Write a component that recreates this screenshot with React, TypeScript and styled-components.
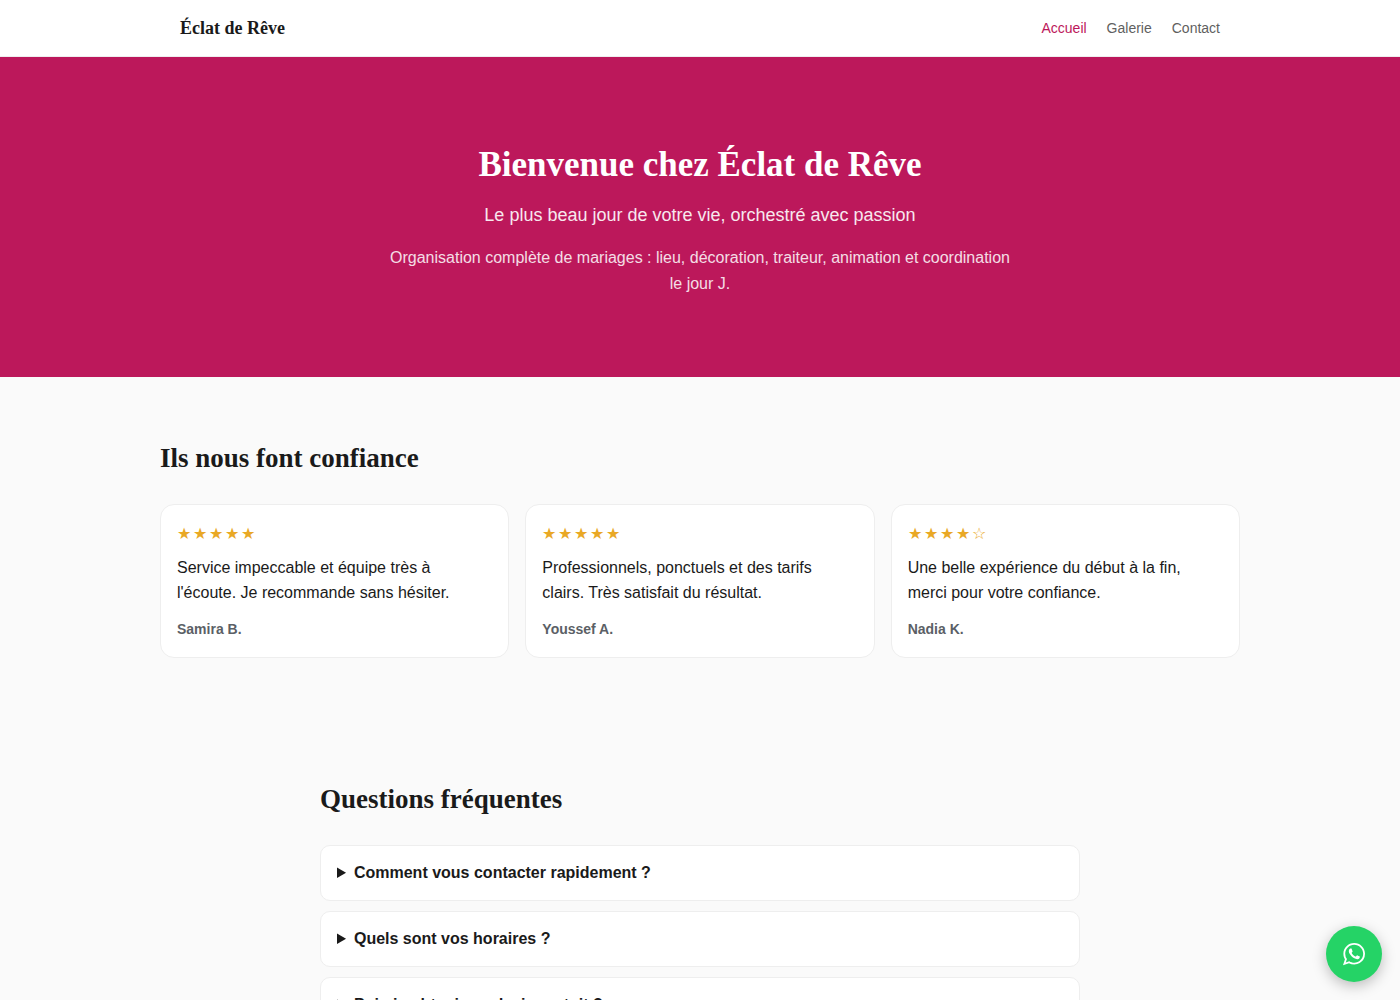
import React from "react";
import styled, { createGlobalStyle } from "styled-components";

const colors = {
  primary: "#bc185b",
  ink: "#1a1a1a",
  muted: "#5b5f66",
  nav: "#5f5f5f",
  line: "#eeeeee",
  page: "#fafafa",
  star: "#e9a825",
  whatsapp: "#25d366",
};

const serif = `"Liberation Serif", "Times New Roman", serif`;
const sans = `"Liberation Sans", Arial, sans-serif`;

const GlobalStyle = createGlobalStyle`
  *, *::before, *::after { box-sizing: border-box; }
  html { scrollbar-width: none; }
  body {
    margin: 0;
    background: ${colors.page};
    color: ${colors.ink};
    font-family: ${sans};
    font-size: 16px;
    line-height: 25px;
  }
`;

const Header = styled.header`
  background: #ffffff;
  border-bottom: 1px solid ${colors.line};
`;

const HeaderInner = styled.div`
  display: flex;
  align-items: center;
  justify-content: space-between;
  max-width: 1080px;
  margin: 0 auto;
  padding: 14px 20px;
`;

const Brand = styled.a`
  color: ${colors.ink};
  font-family: ${serif};
  font-size: 18px;
  font-weight: 700;
  line-height: 28px;
  text-decoration: none;
`;

const Nav = styled.nav`
  display: flex;
  gap: 20px;
`;

const NavLink = styled.a<{ $active?: boolean }>`
  color: ${(p) => (p.$active ? colors.primary : colors.nav)};
  font-size: 14px;
  text-decoration: none;
`;

const Hero = styled.section`
  padding: 80px 20px;
  background: ${colors.primary};
  color: #ffffff;
  text-align: center;
`;

const HeroTitle = styled.h1`
  margin: 0 0 8px;
  font-family: ${serif};
  font-size: 35px;
  line-height: 56px;
`;

const HeroTagline = styled.p`
  margin: 0 0 16px;
  font-size: 18px;
  line-height: 28px;
  opacity: 0.9;
`;

const HeroText = styled.p`
  max-width: 630px;
  margin: 0 auto;
  line-height: 26px;
  opacity: 0.85;
`;

const Section = styled.section<{ $width: number }>`
  max-width: ${(p) => p.$width}px;
  margin: 0 auto;
  padding: 60px 0;
`;

const SectionTitle = styled.h2`
  margin: 0 0 24px;
  font-family: ${serif};
  font-size: 27px;
  line-height: 43px;
`;

const ReviewGrid = styled.div`
  display: grid;
  grid-template-columns: repeat(auto-fit, minmax(260px, 1fr));
  gap: 16px;
`;

const ReviewCard = styled.article`
  padding: 16px;
  background: #ffffff;
  border: 1px solid ${colors.line};
  border-radius: 14px;
`;

const Stars = styled.div`
  display: flex;
  gap: 2px;
  color: ${colors.star};
  line-height: 26px;
`;

const Quote = styled.p`
  margin: 8px 0 12px;
`;

const Author = styled.div`
  color: ${colors.muted};
  font-size: 14px;
  font-weight: 700;
  line-height: 24px;
`;

const FaqList = styled.div`
  display: grid;
  gap: 10px;
`;

const FaqItem = styled.details`
  padding: 14px 16px;
  background: #ffffff;
  border: 1px solid ${colors.line};
  border-radius: 10px;
`;

const Question = styled.summary`
  font-weight: 700;
  line-height: 26px;
  cursor: pointer;
`;

const Answer = styled.p`
  margin: 8px 0 0;
`;

const ChatButton = styled.a`
  position: fixed;
  right: 18px;
  bottom: 18px;
  display: flex;
  align-items: center;
  justify-content: center;
  width: 56px;
  height: 56px;
  border-radius: 50%;
  background: ${colors.whatsapp};
  color: #ffffff;
  box-shadow: 0 4px 14px rgba(0, 0, 0, 0.25);
`;

const reviews = [
  {
    rating: 5,
    text: "Service impeccable et équipe très à l'écoute. Je recommande sans hésiter.",
    author: "Samira B.",
  },
  {
    rating: 5,
    text: "Professionnels, ponctuels et des tarifs clairs. Très satisfait du résultat.",
    author: "Youssef A.",
  },
  {
    rating: 4,
    text: "Une belle expérience du début à la fin, merci pour votre confiance.",
    author: "Nadia K.",
  },
];

const faqs = [
  {
    question: "Comment vous contacter rapidement ?",
    answer: "Écrivez-nous directement sur WhatsApp.",
  },
  {
    question: "Quels sont vos horaires ?",
    answer: "Nous sommes disponibles du lundi au samedi.",
  },
  {
    question: "Puis-je obtenir un devis gratuit ?",
    answer: "Oui, le devis est gratuit et sans engagement.",
  },
];

function Rating({ value }: { value: number }) {
  return (
    <Stars role="img" aria-label={`${value} sur 5`}>
      {[1, 2, 3, 4, 5].map((n) => (
        <span key={n}>{n <= value ? "★" : "☆"}</span>
      ))}
    </Stars>
  );
}

function WhatsappIcon() {
  return (
    <svg width="32" height="32" viewBox="0 0 32 32" fill="currentColor" aria-hidden="true">
      <path d="M19.11 17.205c-.372 0-1.088 1.39-1.518 1.39a.63.63 0 0 1-.315-.1c-.802-.402-1.504-.817-2.163-1.447-.545-.516-1.146-1.29-1.46-1.963a.426.426 0 0 1-.073-.215c0-.33.99-.945.99-1.49 0-.143-.73-2.09-.832-2.335-.143-.372-.214-.487-.6-.487-.187 0-.36-.043-.53-.043-.302 0-.53.115-.746.315-.688.645-1.032 1.318-1.06 2.264v.114c-.015.99.472 1.977 1.017 2.78 1.23 1.82 2.506 3.41 4.554 4.34.616.287 2.035.888 2.722.888.817 0 2.15-.515 2.478-1.318.13-.33.244-.73.244-1.088 0-.058 0-.144-.03-.215-.1-.172-2.434-1.39-2.678-1.39zm-2.908 7.593c-1.747 0-3.48-.53-4.942-1.49L7.793 24.41l1.132-3.337a8.955 8.955 0 0 1-1.72-5.272c0-4.955 4.04-8.995 8.997-8.995S25.2 10.845 25.2 15.8c0 4.958-4.04 8.998-8.998 8.998zm0-19.798c-5.96 0-10.8 4.842-10.8 10.8 0 1.964.53 3.898 1.546 5.574L5 27.176l5.974-1.92a10.807 10.807 0 0 0 16.03-9.455c0-5.958-4.842-10.8-10.802-10.8z" />
    </svg>
  );
}

export default function App() {
  return (
    <>
      <GlobalStyle />
      <Header>
        <HeaderInner>
          <Brand href="#">Éclat de Rêve</Brand>
          <Nav>
            <NavLink href="#" $active>
              Accueil
            </NavLink>
            <NavLink href="#galerie">Galerie</NavLink>
            <NavLink href="#contact">Contact</NavLink>
          </Nav>
        </HeaderInner>
      </Header>
      <main>
        <Hero>
          <HeroTitle>Bienvenue chez Éclat de Rêve</HeroTitle>
          <HeroTagline>Le plus beau jour de votre vie, orchestré avec passion</HeroTagline>
          <HeroText>
            Organisation complète de mariages : lieu, décoration, traiteur, animation et
            coordination le jour J.
          </HeroText>
        </Hero>
        <Section $width={1080}>
          <SectionTitle>Ils nous font confiance</SectionTitle>
          <ReviewGrid>
            {reviews.map((review) => (
              <ReviewCard key={review.author}>
                <Rating value={review.rating} />
                <Quote>{review.text}</Quote>
                <Author>{review.author}</Author>
              </ReviewCard>
            ))}
          </ReviewGrid>
        </Section>
        <Section $width={760}>
          <SectionTitle>Questions fréquentes</SectionTitle>
          <FaqList>
            {faqs.map((faq) => (
              <FaqItem key={faq.question}>
                <Question>{faq.question}</Question>
                <Answer>{faq.answer}</Answer>
              </FaqItem>
            ))}
          </FaqList>
        </Section>
      </main>
      <ChatButton href="#whatsapp" aria-label="WhatsApp">
        <WhatsappIcon />
      </ChatButton>
    </>
  );
}
